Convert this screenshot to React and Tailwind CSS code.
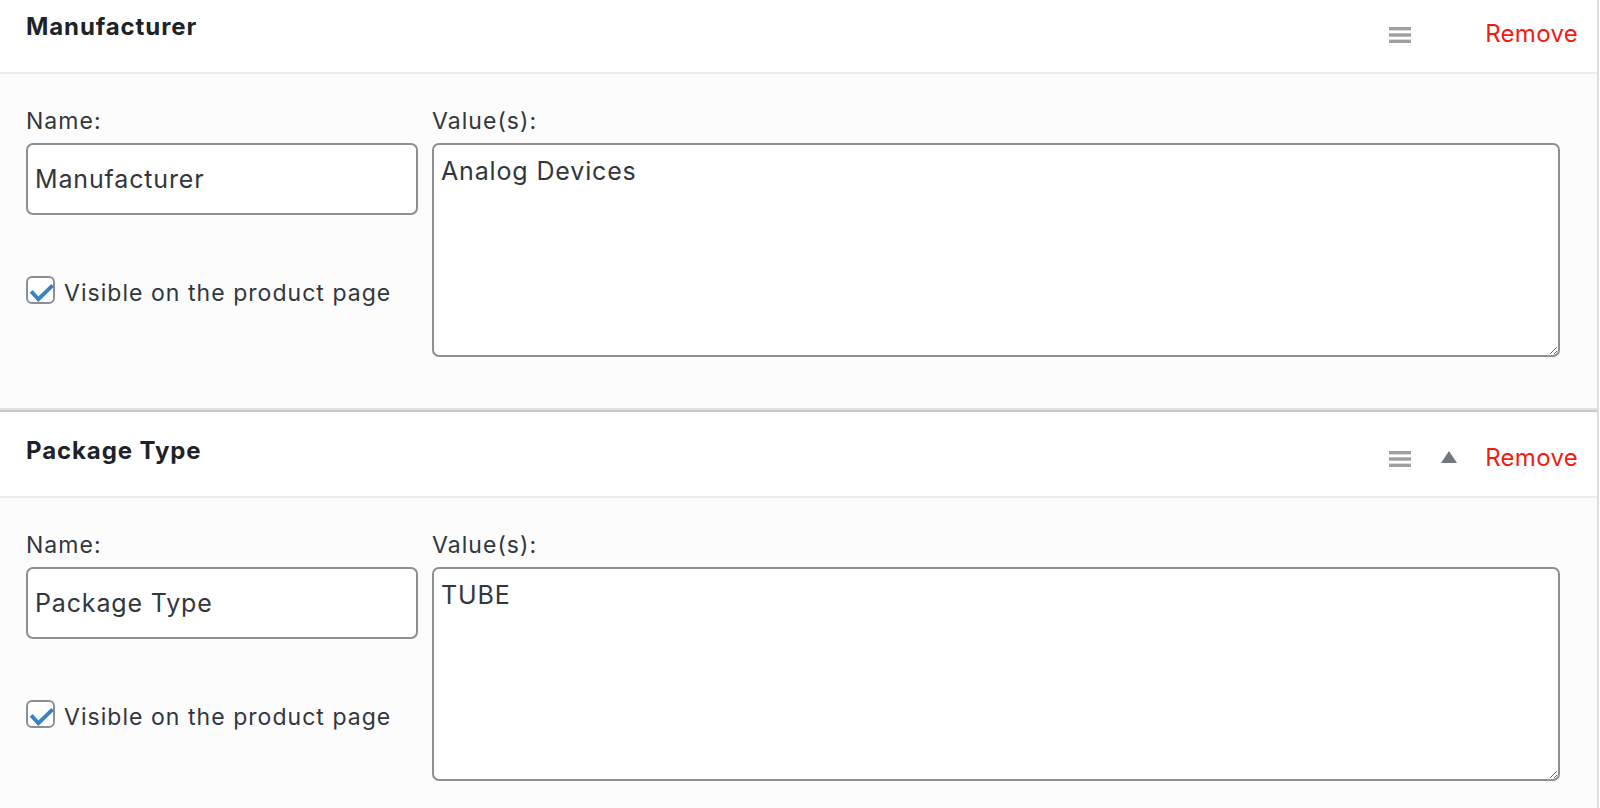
import React from 'react'

const ATTRIBUTES = [
  { name: 'Manufacturer', value: 'Analog Devices', canMoveUp: false },
  { name: 'Package Type', value: 'TUBE', canMoveUp: true },
]

// drag handle (three bars)
function MenuIcon() {
  return (
    <svg width="22" height="16" viewBox="0 0 22 16" className="block">
      <rect x="0" y="0" width="22" height="3.4" fill="#a0a0a0" />
      <rect x="0" y="6.3" width="22" height="3.4" fill="#a0a0a0" />
      <rect x="0" y="12.6" width="22" height="3.4" fill="#a0a0a0" />
    </svg>
  )
}

function ArrowUp({ hidden }) {
  return (
    <svg width="16" height="12" viewBox="0 0 16 12" className={hidden ? 'block invisible' : 'block'}>
      <polygon points="0,12 8,0 16,12" fill="#72777c" />
    </svg>
  )
}

function CheckBox() {
  return (
    <span className="relative block h-[28px] w-[29px] shrink-0 rounded-[6px] border-2 border-[#8c8f94] bg-white">
      <svg width="29" height="28" viewBox="0 0 29 28" className="absolute -left-[2px] -top-[2px]">
        <path d="M5.2 15.4 L12.4 23.2 L26.6 9.4" fill="none" stroke="#3582c4" strokeWidth="3.8" strokeLinejoin="miter" />
      </svg>
    </span>
  )
}

function AttributeRow({ name, value, canMoveUp, first }) {
  return (
    <div className="border-b-2 border-[#c9c9c9]">
      {/* header */}
      <div className="flex h-[86px] items-start border-b-2 border-[#ebebeb] bg-white pl-[26px] pr-[19px]">
        <strong className="pt-[27px] text-[24px] font-bold leading-[24px] tracking-[0.9px] text-[#1d2327]">
          {name}
        </strong>
        <div className="ml-auto flex items-start">
          <span className="pt-[39px]">
            <MenuIcon />
          </span>
          <span className="ml-[30px] pt-[39px]">
            <ArrowUp hidden={!canMoveUp} />
          </span>
          <a className="ml-[28px] cursor-pointer pt-[34px] text-[24px] leading-[24px] tracking-[0.3px] text-[#f21b0f]">
            Remove
          </a>
        </div>
      </div>

      {/* body */}
      <div
        className={`${first ? 'h-[336px]' : 'h-[337px]'} border-b-2 border-[#e3e3e3] bg-[#fcfcfc] pl-[26px] pr-[37px] pt-[36px]`}
      >
        <div className="grid grid-cols-[392px_1fr] gap-x-[14px]">
          <div className="flex flex-col">
            <label className="text-[23px] leading-[23px] tracking-[1.04px] text-[#32373c]">Name:</label>
            <input
              readOnly
              value={name}
              className="mt-[10px] h-[72px] w-full rounded-[7px] border-2 border-[#8c8f94] bg-white pl-[7px] text-[25px] tracking-[0.85px] text-[#32373c] outline-none"
            />
            <label className="mt-[61px] flex items-start">
              <CheckBox />
              <span className="ml-[9px] pt-[3px] text-[23px] leading-[28px] tracking-[1.04px] text-[#32373c]">
                Visible on the product page
              </span>
            </label>
          </div>
          <div className="flex flex-col">
            <label className="text-[23px] leading-[23px] tracking-[1.04px] text-[#32373c]">Value(s):</label>
            <textarea
              readOnly
              value={value}
              className="mt-[10px] h-[214px] w-full rounded-[7px] border-2 border-[#8c8f94] bg-white pl-[7px] pt-[8px] text-[25px] leading-[37.5px] tracking-[0.85px] text-[#32373c] outline-none"
            />
          </div>
        </div>
      </div>
    </div>
  )
}

export default function App() {
  return (
    <div className="h-[808px] overflow-hidden bg-white font-['Inter',sans-serif]">
      <div className="-mt-[12px] w-[1599px] border-r-2 border-[#dcdcde]">
        {ATTRIBUTES.map((a, i) => (
          <AttributeRow key={a.name} first={i === 0} {...a} />
        ))}
      </div>
    </div>
  )
}
